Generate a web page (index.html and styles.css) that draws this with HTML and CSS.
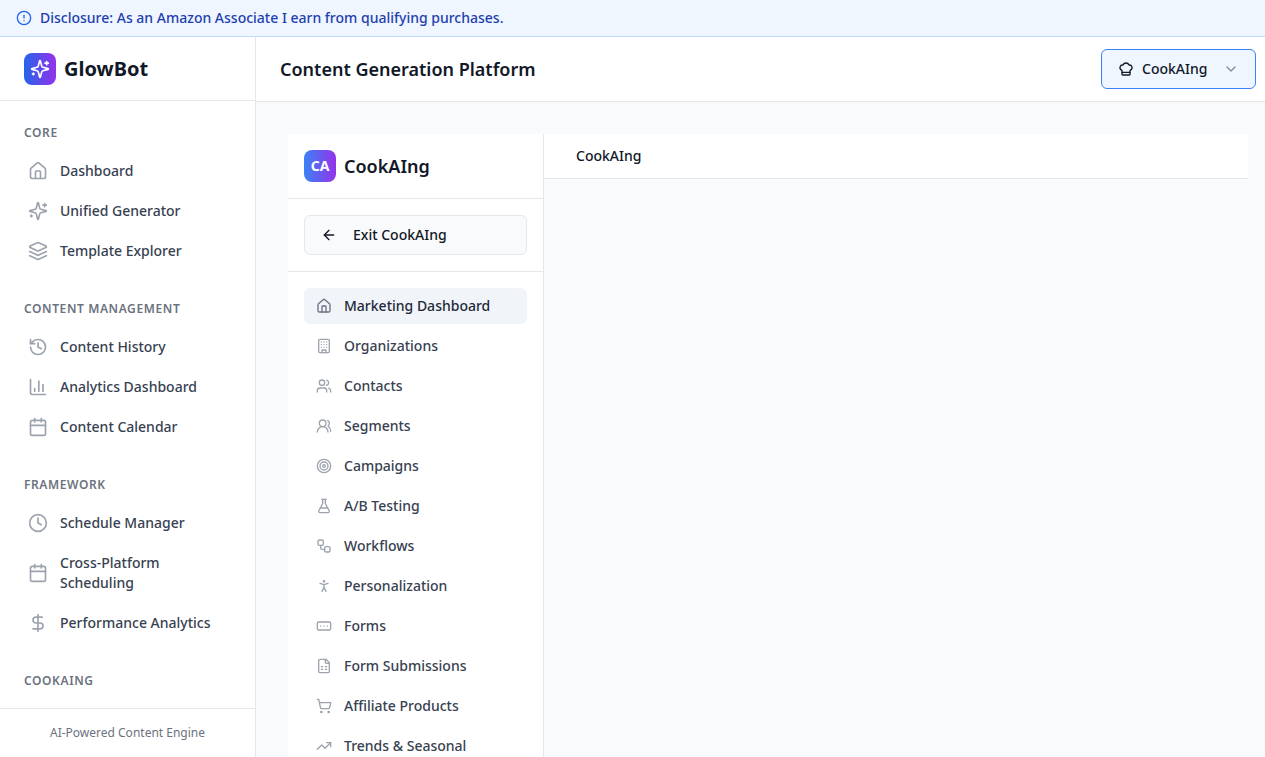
FILE: index.html
```html
<!DOCTYPE html>
<html lang="en">
<head>
<meta charset="utf-8">
<title>GlowBot</title>
<link rel="stylesheet" href="styles.css">
</head>
<body>
<svg class="sprite" xmlns="http://www.w3.org/2000/svg">
  <symbol id="i-alert" viewBox="0 0 24 24"><circle cx="12" cy="12" r="10"/><path d="M12 8v4"/><path d="M12 16h.01"/></symbol>
  <symbol id="i-house" viewBox="0 0 24 24"><path d="M15 21v-8a1 1 0 0 0-1-1h-4a1 1 0 0 0-1 1v8"/><path d="M3 10a2 2 0 0 1 .709-1.528l7-5.999a2 2 0 0 1 2.582 0l7 5.999A2 2 0 0 1 21 10v9a2 2 0 0 1-2 2H5a2 2 0 0 1-2-2z"/></symbol>
  <symbol id="i-sparkles" viewBox="0 0 24 24"><path d="M9.937 15.5A2 2 0 0 0 8.5 14.063l-6.135-1.582a.5.5 0 0 1 0-.962L8.5 9.936A2 2 0 0 0 9.937 8.5l1.582-6.135a.5.5 0 0 1 .963 0L14.063 8.5A2 2 0 0 0 15.5 9.937l6.135 1.581a.5.5 0 0 1 0 .964L15.5 14.063a2 2 0 0 0-1.437 1.437l-1.582 6.135a.5.5 0 0 1-.963 0z"/><path d="M20 3v4"/><path d="M22 5h-4"/><path d="M4 17v2"/><path d="M5 18H3"/></symbol>
  <symbol id="i-layers" viewBox="0 0 24 24"><path d="m12.83 2.18a2 2 0 0 0-1.66 0L2.6 6.08a1 1 0 0 0 0 1.83l8.58 3.91a2 2 0 0 0 1.66 0l8.58-3.9a1 1 0 0 0 0-1.83Z"/><path d="m22 17.65-9.17 4.16a2 2 0 0 1-1.66 0L2 17.65"/><path d="m22 12.65-9.17 4.16a2 2 0 0 1-1.66 0L2 12.65"/></symbol>
  <symbol id="i-history" viewBox="0 0 24 24"><path d="M3 12a9 9 0 1 0 9-9 9.75 9.75 0 0 0-6.74 2.74L3 8"/><path d="M3 3v5h5"/><path d="M12 7v5l4 2"/></symbol>
  <symbol id="i-chart" viewBox="0 0 24 24"><path d="M3 3v16a2 2 0 0 0 2 2h16"/><path d="M18 17V9"/><path d="M13 17V5"/><path d="M8 17v-3"/></symbol>
  <symbol id="i-calendar" viewBox="0 0 24 24"><path d="M8 2v4"/><path d="M16 2v4"/><rect width="18" height="18" x="3" y="4" rx="2"/><path d="M3 10h18"/></symbol>
  <symbol id="i-clock" viewBox="0 0 24 24"><circle cx="12" cy="12" r="10"/><path d="M12 6v6l4 2"/></symbol>
  <symbol id="i-dollar" viewBox="0 0 24 24"><path d="M12 2v20"/><path d="M17 5H9.5a3.5 3.5 0 0 0 0 7h5a3.5 3.5 0 0 1 0 7H6"/></symbol>
  <symbol id="i-chef" viewBox="0 0 24 24"><path d="M17 21a1 1 0 0 0 1-1v-5.35c0-.457.316-.844.727-1.041a4 4 0 0 0-2.134-7.589 5 5 0 0 0-9.186 0 4 4 0 0 0-2.134 7.588c.411.198.727.585.727 1.041V20a1 1 0 0 0 1 1Z"/><path d="M6 17h12"/></symbol>
  <symbol id="i-chevron" viewBox="0 0 24 24"><path d="m6 9 6 6 6-6"/></symbol>
  <symbol id="i-arrow" viewBox="0 0 24 24"><path d="m12 19-7-7 7-7"/><path d="M19 12H5"/></symbol>
  <symbol id="i-building" viewBox="0 0 24 24"><rect width="16" height="20" x="4" y="2" rx="2" ry="2"/><path d="M9 22v-4h6v4"/><path d="M8 6h.01"/><path d="M16 6h.01"/><path d="M12 6h.01"/><path d="M12 10h.01"/><path d="M12 14h.01"/><path d="M16 10h.01"/><path d="M16 14h.01"/><path d="M8 10h.01"/><path d="M8 14h.01"/></symbol>
  <symbol id="i-users" viewBox="0 0 24 24"><path d="M16 21v-2a4 4 0 0 0-4-4H6a4 4 0 0 0-4 4v2"/><circle cx="9" cy="7" r="4"/><path d="M22 21v-2a4 4 0 0 0-3-3.87"/><path d="M16 3.13a4 4 0 0 1 0 7.75"/></symbol>
  <symbol id="i-users-round" viewBox="0 0 24 24"><path d="M18 21a8 8 0 0 0-16 0"/><circle cx="10" cy="8" r="5"/><path d="M22 20c0-3.37-2-6.5-4-8a5 5 0 0 0-.45-8.3"/></symbol>
  <symbol id="i-target" viewBox="0 0 24 24"><circle cx="12" cy="12" r="10"/><circle cx="12" cy="12" r="6"/><circle cx="12" cy="12" r="2"/></symbol>
  <symbol id="i-flask" viewBox="0 0 24 24"><path d="M14 2v6a2 2 0 0 0 .245.96l5.51 10.08A2 2 0 0 1 18 22H6a2 2 0 0 1-1.755-2.96l5.51-10.08A2 2 0 0 0 10 8V2"/><path d="M6.453 15h11.094"/><path d="M8.5 2h7"/></symbol>
  <symbol id="i-workflow" viewBox="0 0 24 24"><rect width="8" height="8" x="3" y="3" rx="2"/><path d="M7 11v4a2 2 0 0 0 2 2h4"/><rect width="8" height="8" x="13" y="13" rx="2"/></symbol>
  <symbol id="i-person" viewBox="0 0 24 24"><circle cx="12" cy="5" r="1"/><path d="m9 20 3-6 3 6"/><path d="m6 8 6 2 6-2"/><path d="M12 10v4"/></symbol>
  <symbol id="i-input" viewBox="0 0 24 24"><rect width="20" height="12" x="2" y="6" rx="2"/><path d="M12 12h.01"/><path d="M17 12h.01"/><path d="M7 12h.01"/></symbol>
  <symbol id="i-sheet" viewBox="0 0 24 24"><path d="M15 2H6a2 2 0 0 0-2 2v16a2 2 0 0 0 2 2h12a2 2 0 0 0 2-2V7Z"/><path d="M14 2v4a2 2 0 0 0 2 2h4"/><path d="M8 13h2"/><path d="M14 13h2"/><path d="M8 17h2"/><path d="M14 17h2"/></symbol>
  <symbol id="i-cart" viewBox="0 0 24 24"><circle cx="8" cy="21" r="1"/><circle cx="19" cy="21" r="1"/><path d="M2.05 2.05h2l2.66 12.42a2 2 0 0 0 2 1.58h9.78a2 2 0 0 0 1.95-1.57l1.65-7.43H5.12"/></symbol>
  <symbol id="i-trend" viewBox="0 0 24 24"><path d="M22 7 13.5 15.5 8.5 10.5 2 17"/><path d="M16 7h6v6"/></symbol>
</svg>

<div class="app">
  <div class="banner">
    <svg class="icon banner-icon"><use href="#i-alert"/></svg>
    <span>Disclosure: As an Amazon Associate I earn from qualifying purchases.</span>
  </div>
  <div class="shell">
    <aside class="side">
      <div class="brand">
        <span class="logo"><svg class="icon logo-icon"><use href="#i-sparkles"/></svg></span>
        <span class="brand-name">GlowBot</span>
      </div>
      <nav class="side-nav">
        <section class="group">
          <h3 class="group-title">Core</h3>
          <a class="link"><svg class="icon link-icon"><use href="#i-house"/></svg><span>Dashboard</span></a>
          <a class="link"><svg class="icon link-icon"><use href="#i-sparkles"/></svg><span>Unified Generator</span></a>
          <a class="link"><svg class="icon link-icon"><use href="#i-layers"/></svg><span>Template Explorer</span></a>
        </section>
        <section class="group">
          <h3 class="group-title">Content Management</h3>
          <a class="link"><svg class="icon link-icon"><use href="#i-history"/></svg><span>Content History</span></a>
          <a class="link"><svg class="icon link-icon"><use href="#i-chart"/></svg><span>Analytics Dashboard</span></a>
          <a class="link"><svg class="icon link-icon"><use href="#i-calendar"/></svg><span>Content Calendar</span></a>
        </section>
        <section class="group">
          <h3 class="group-title">Framework</h3>
          <a class="link"><svg class="icon link-icon"><use href="#i-clock"/></svg><span>Schedule Manager</span></a>
          <a class="link"><svg class="icon link-icon"><use href="#i-calendar"/></svg><span>Cross-Platform Scheduling</span></a>
          <a class="link"><svg class="icon link-icon"><use href="#i-dollar"/></svg><span>Performance Analytics</span></a>
        </section>
        <section class="group">
          <h3 class="group-title">CookAIng</h3>
        </section>
      </nav>
      <div class="side-foot">AI-Powered Content Engine</div>
    </aside>
    <main class="main">
      <header class="topbar">
        <h1 class="page-title">Content Generation Platform</h1>
        <button class="picker">
          <svg class="icon picker-icon"><use href="#i-chef"/></svg>
          <span class="picker-label">CookAIng</span>
          <svg class="icon picker-chevron"><use href="#i-chevron"/></svg>
        </button>
      </header>
      <div class="content">
        <aside class="sub">
          <div class="sub-brand">
            <span class="sub-logo">CA</span>
            <span class="sub-name">CookAIng</span>
          </div>
          <div class="sub-exit">
            <button class="exit"><svg class="icon exit-icon"><use href="#i-arrow"/></svg><span>Exit CookAIng</span></button>
          </div>
          <nav class="sub-nav">
            <a class="sub-link active"><svg class="icon sub-icon"><use href="#i-house"/></svg><span>Marketing Dashboard</span></a>
            <a class="sub-link"><svg class="icon sub-icon"><use href="#i-building"/></svg><span>Organizations</span></a>
            <a class="sub-link"><svg class="icon sub-icon"><use href="#i-users"/></svg><span>Contacts</span></a>
            <a class="sub-link"><svg class="icon sub-icon"><use href="#i-users-round"/></svg><span>Segments</span></a>
            <a class="sub-link"><svg class="icon sub-icon"><use href="#i-target"/></svg><span>Campaigns</span></a>
            <a class="sub-link"><svg class="icon sub-icon"><use href="#i-flask"/></svg><span>A/B Testing</span></a>
            <a class="sub-link"><svg class="icon sub-icon"><use href="#i-workflow"/></svg><span>Workflows</span></a>
            <a class="sub-link"><svg class="icon sub-icon"><use href="#i-person"/></svg><span>Personalization</span></a>
            <a class="sub-link"><svg class="icon sub-icon"><use href="#i-input"/></svg><span>Forms</span></a>
            <a class="sub-link"><svg class="icon sub-icon"><use href="#i-sheet"/></svg><span>Form Submissions</span></a>
            <a class="sub-link"><svg class="icon sub-icon"><use href="#i-cart"/></svg><span>Affiliate Products</span></a>
            <a class="sub-link"><svg class="icon sub-icon"><use href="#i-trend"/></svg><span>Trends &amp; Seasonal</span></a>
          </nav>
        </aside>
        <section class="pane">
          <div class="crumb">CookAIng</div>
        </section>
      </div>
    </main>
  </div>
</div>
</body>
</html>
```
FILE: styles.css
```css
* { box-sizing: border-box; }
html, body { height: 100%; }
body {
  margin: 0;
  overflow: hidden;
  font-family: "Noto Sans", "Liberation Sans", sans-serif;
  font-size: 14px;
  line-height: 20px;
  color: #111827;
  background: #fff;
}
h1, h3 { margin: 0; }
button { font: inherit; color: inherit; cursor: pointer; }

.sprite { display: none; }
.icon {
  flex: none;
  fill: none;
  stroke: currentColor;
  stroke-width: 2;
  stroke-linecap: round;
  stroke-linejoin: round;
}

.app { display: flex; flex-direction: column; height: 100vh; }

.banner {
  flex: none;
  display: flex;
  align-items: center;
  gap: 8px;
  height: 37px;
  padding: 0 16px;
  background: #eff6ff;
  border-bottom: 1px solid #bfdbfe;
  color: #1e40af;
  font-weight: 500;
}
.banner-icon { width: 16px; height: 16px; color: #2563eb; }

.shell { flex: 1; min-height: 0; display: flex; }

.side {
  flex: none;
  width: 256px;
  display: flex;
  flex-direction: column;
  background: #fff;
  border-right: 1px solid #e5e7eb;
}
.brand {
  flex: none;
  height: 64px;
  display: flex;
  align-items: center;
  gap: 8px;
  padding: 0 24px;
  border-bottom: 1px solid #e5e7eb;
}
.logo {
  width: 32px;
  height: 32px;
  display: flex;
  align-items: center;
  justify-content: center;
  border-radius: 8px;
  background: linear-gradient(to right, #2563eb, #9333ea);
  color: #fff;
}
.logo-icon { width: 20px; height: 20px; }
.brand-name { font-size: 20px; line-height: 28px; font-weight: 700; }

.side-nav { flex: 1; min-height: 0; overflow: hidden; padding: 24px 24px 0; }
.group { margin-bottom: 30px; }
.group-title {
  margin-bottom: 10px;
  font-size: 12px;
  line-height: 16px;
  font-weight: 600;
  letter-spacing: 0.6px;
  text-transform: uppercase;
  color: #6b7280;
}
.link {
  display: flex;
  align-items: center;
  gap: 12px;
  padding: 10px 4px;
  font-weight: 500;
  color: #374151;
}
.link-icon { width: 20px; height: 20px; color: #9ca3af; }

.side-foot {
  flex: none;
  height: 49px;
  display: flex;
  align-items: center;
  justify-content: center;
  border-top: 1px solid #e5e7eb;
  font-size: 12px;
  line-height: 16px;
  color: #6b7280;
}

.main { flex: 1; min-width: 0; display: flex; flex-direction: column; background: #f9fafb; }
.topbar {
  flex: none;
  height: 65px;
  display: flex;
  align-items: center;
  justify-content: space-between;
  padding: 0 9px 0 24px;
  background: #fff;
  border-bottom: 1px solid #e5e7eb;
}
.page-title { font-size: 18px; line-height: 28px; font-weight: 600; color: #111827; }
.picker {
  width: 155px;
  height: 40px;
  display: flex;
  align-items: center;
  padding: 0 16px;
  background: #eff6ff;
  border: 1px solid #3b82f6;
  border-radius: 6px;
  font-weight: 500;
}
.picker-icon { width: 16px; height: 16px; margin-right: 8px; }
.picker-label { flex: 1; text-align: left; }
.picker-chevron { width: 16px; height: 16px; color: #6b7280; opacity: 0.8; }

.content {
  flex: 1;
  min-height: 0;
  overflow: hidden;
  display: flex;
  padding: 32px 17px 0 32px;
}
.sub {
  flex: none;
  width: 256px;
  background: #fff;
  border-right: 1px solid #e5e7eb;
}
.sub-brand {
  height: 65px;
  display: flex;
  align-items: center;
  gap: 8px;
  padding: 0 16px;
  border-bottom: 1px solid #e5e7eb;
}
.sub-logo {
  width: 32px;
  height: 32px;
  display: flex;
  align-items: center;
  justify-content: center;
  border-radius: 8px;
  background: linear-gradient(to right, #3b82f6, #9333ea);
  color: #fff;
  font-weight: 700;
}
.sub-name { font-size: 18px; line-height: 28px; font-weight: 600; }
.sub-exit { padding: 16px; border-bottom: 1px solid #e5e7eb; }
.exit {
  width: 100%;
  height: 40px;
  display: flex;
  align-items: center;
  gap: 16px;
  padding: 0 16px;
  background: #f9fafb;
  border: 1px solid #e5e7eb;
  border-radius: 6px;
  font-weight: 500;
}
.exit-icon { width: 16px; height: 16px; }
.sub-nav { display: flex; flex-direction: column; gap: 4px; padding: 16px; }
.sub-link {
  flex: none;
  height: 36px;
  display: flex;
  align-items: center;
  gap: 12px;
  padding: 0 12px;
  border-radius: 6px;
  font-weight: 500;
  color: #374151;
}
.sub-link.active { background: #f1f5f9; color: #1e293b; }
.sub-icon { width: 16px; height: 16px; color: #9ca3af; }
.sub-link.active .sub-icon { color: #6b7280; }

.pane { flex: 1; min-width: 0; }
.crumb {
  height: 45px;
  display: flex;
  align-items: center;
  padding: 0 32px;
  background: #fff;
  border-bottom: 1px solid #e5e7eb;
  font-weight: 500;
}
```
